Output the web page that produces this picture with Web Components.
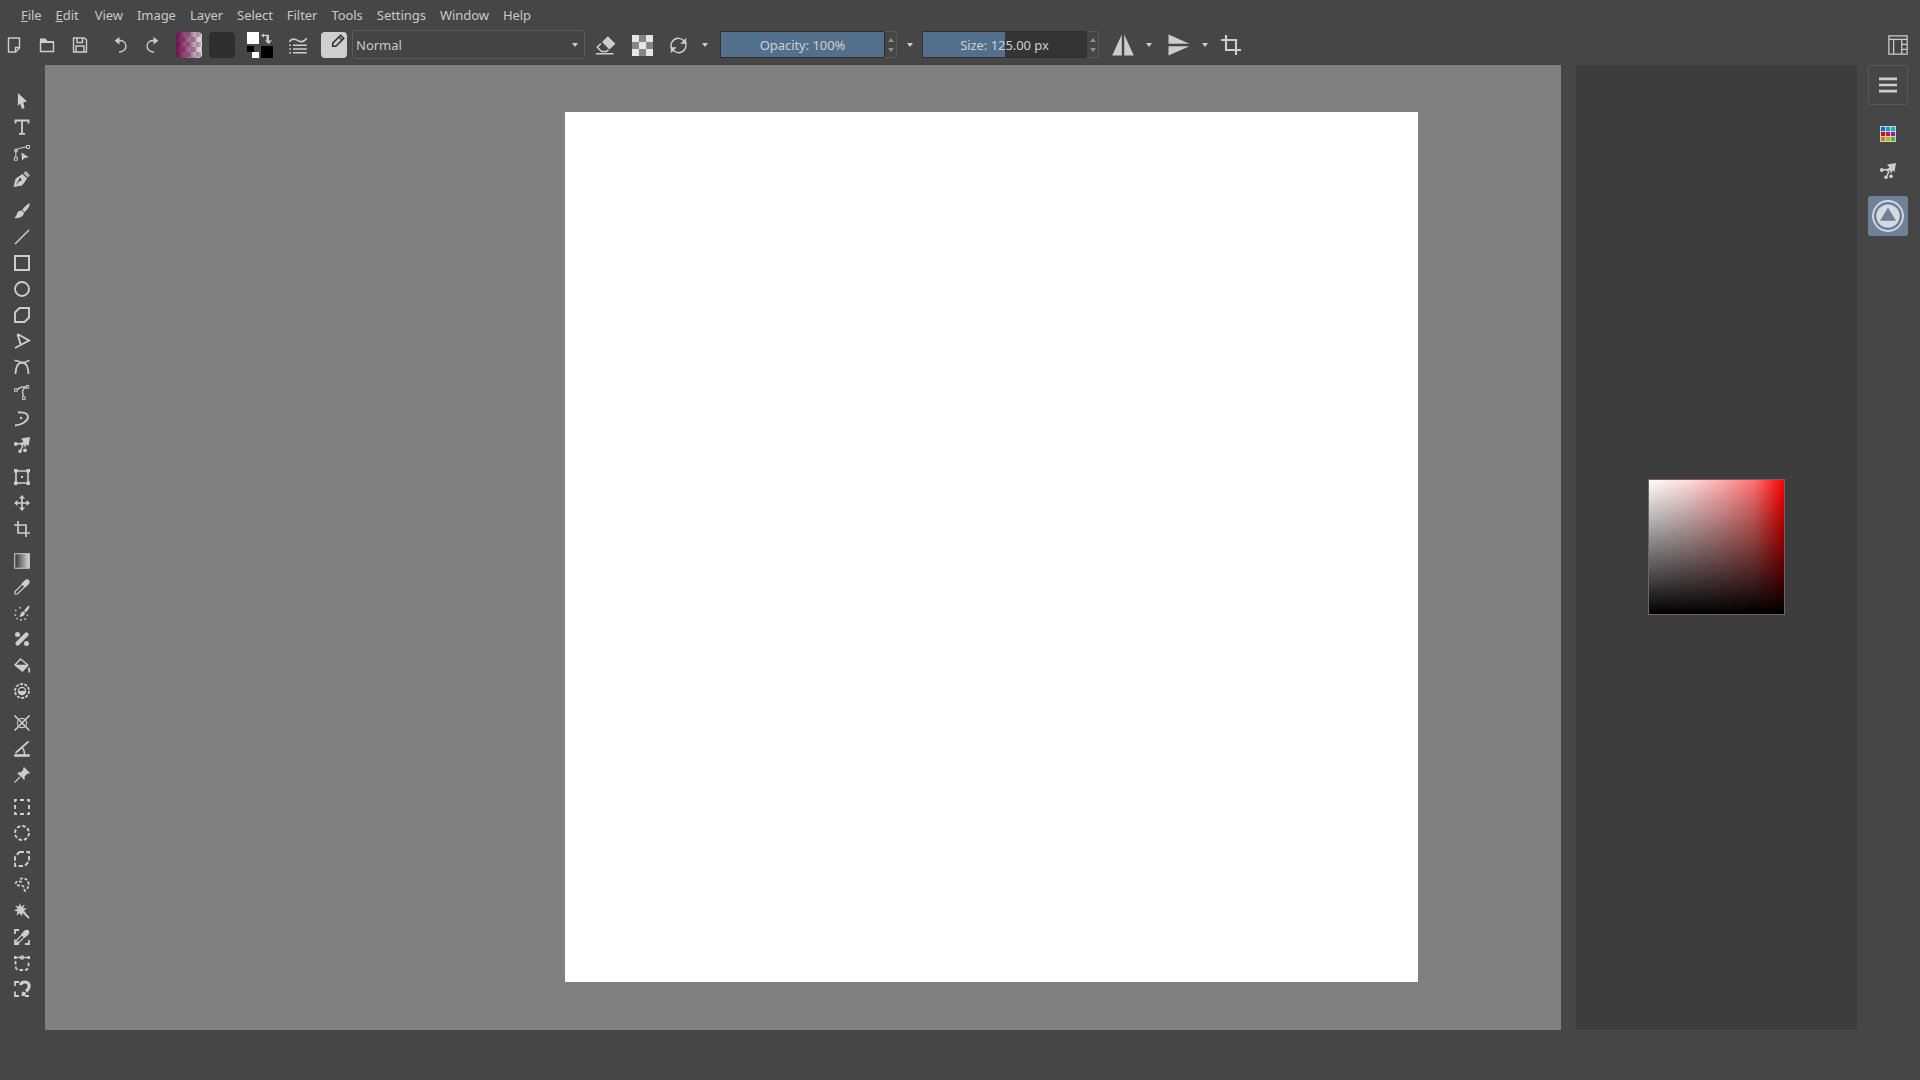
<!DOCTYPE html>
<html>
<head>
<meta charset="utf-8">
<title>Krita</title>
<style>
    html, body { margin: 0; height: 100%; background: #464646; overflow: hidden; }
    body { font: 13px "Noto Sans", sans-serif; color: #c9c9c9; }
</style>
</head>
<body>
<k-window>
    <k-menubar>
        <k-menu-item><u>F</u>ile</k-menu-item>
        <k-menu-item><u>E</u>dit</k-menu-item>
        <k-menu-item style="margin-left:2px">View</k-menu-item>
        <k-menu-item>Image</k-menu-item>
        <k-menu-item>Layer</k-menu-item>
        <k-menu-item>Select</k-menu-item>
        <k-menu-item>Filter</k-menu-item>
        <k-menu-item>Tools</k-menu-item>
        <k-menu-item>Settings</k-menu-item>
        <k-menu-item>Window</k-menu-item>
        <k-menu-item>Help</k-menu-item>
    </k-menubar>
    <k-toolbar>
        <k-tool name="new" w="28"></k-tool>
        <k-tool name="open" w="28" style="margin-left:5px"></k-tool>
        <k-tool name="save" w="28" style="margin-left:5px"></k-tool>
        <k-tool name="undo" w="28" style="margin-left:13px"></k-tool>
        <k-tool name="redo" w="28" style="margin-left:3px"></k-tool>
        <k-swatch kind="gradient" style="margin-left:10px"></k-swatch>
        <k-swatch kind="pattern" style="margin-left:7px"></k-swatch>
        <k-fgbg style="margin-left:12px"></k-fgbg>
        <k-tool name="preset" w="28" size="20" style="margin-left:11px"></k-tool>
        <k-swatch kind="brush" style="margin-left:9px"></k-swatch>
        <k-combo style="margin-left:5px">Normal</k-combo>
        <k-tool name="eraser" w="28" size="20" style="margin-left:7px"></k-tool>
        <k-tool name="alpha" w="28" size="21" style="margin-left:8px"></k-tool>
        <k-tool name="reload" w="28" size="19" style="margin-left:8px"></k-tool>
        <k-caret style="margin-left:9px"></k-caret>
        <k-slider fill="100" style="margin-left:11px">Opacity: 100%</k-slider>
        <k-caret style="margin-left:9px"></k-caret>
        <k-slider fill="50.3" style="margin-left:8px">Size: 125.00 px</k-slider>
        <k-tool name="mirrorh" w="28" size="24" style="margin-left:10px"></k-tool>
        <k-caret style="margin-left:8px"></k-caret>
        <k-tool name="mirrorv" w="28" size="24" style="margin-left:12px"></k-tool>
        <k-caret style="margin-left:8px"></k-caret>
        <k-tool name="crop" w="28" size="20" style="margin-left:8px"></k-tool>
        <k-tool name="layout" w="28" size="20" slot="end"></k-tool>
    </k-toolbar>
    <k-workspace>
        <k-toolbox>
            <k-tool-group>
                <k-tool name="select"></k-tool><k-tool name="text"></k-tool><k-tool name="shapeedit"></k-tool><k-tool name="calligraphy"></k-tool>
            </k-tool-group>
            <k-tool-group>
                <k-tool name="brush"></k-tool><k-tool name="line"></k-tool><k-tool name="rect"></k-tool><k-tool name="ellipse"></k-tool><k-tool name="polygon"></k-tool><k-tool name="polyline"></k-tool><k-tool name="bezier"></k-tool><k-tool name="freepath"></k-tool><k-tool name="dynabrush"></k-tool><k-tool name="multibrush"></k-tool>
            </k-tool-group>
            <k-tool-group>
                <k-tool name="transform"></k-tool><k-tool name="move"></k-tool><k-tool name="crop"></k-tool>
            </k-tool-group>
            <k-tool-group>
                <k-tool name="gradient"></k-tool><k-tool name="picker"></k-tool><k-tool name="colorize"></k-tool><k-tool name="patch"></k-tool><k-tool name="fill"></k-tool><k-tool name="enclose"></k-tool>
            </k-tool-group>
            <k-tool-group>
                <k-tool name="assistant"></k-tool><k-tool name="measure"></k-tool><k-tool name="pin"></k-tool>
            </k-tool-group>
            <k-tool-group>
                <k-tool name="selrect"></k-tool><k-tool name="selellipse"></k-tool><k-tool name="selpoly"></k-tool><k-tool name="sellasso"></k-tool><k-tool name="wand"></k-tool><k-tool name="selpicker"></k-tool><k-tool name="selbezier"></k-tool><k-tool name="selmagnet"></k-tool>
            </k-tool-group>
        </k-toolbox>
        <k-canvas></k-canvas>
        <k-docker><k-color-square></k-color-square></k-docker>
        <k-dock-tabs>
            <k-dock-tab kind="outlined" name="menu"></k-dock-tab>
            <k-dock-tab name="palette" style="margin-top:10px"></k-dock-tab>
            <k-dock-tab name="multibrush"></k-dock-tab>
            <k-dock-tab kind="active" name="advanced"></k-dock-tab>
        </k-dock-tabs>
    </k-workspace>
</k-window>

<script>
const ICONS = {
    new: `<path d="M2.5 1H13.5V11L9.5 15H2.5z"/><path d="M13.5 10.5H9.5V15"/>`,
    open: `<path d="M1.5 5H14.5V14.5H1.5z"/><path class="f" d="M1 1.5H6.5L8.5 4H15V6H1z"/>`,
    save: `<path d="M1.5 1H12.5L14.5 3V15H1.5z"/><path d="M5 1V5.5H10.5V1M4 15V9H12V15"/>`,
    undo: `<path d="M5 3.5C10 3 13 5.5 13 9S10 15 6 15"/><path class="f" d="M6.5 0V7.5L1.5 3.8z"/>`,
    redo: `<path d="M11 3.5C6 3 3 5.5 3 9S6 15 10 15"/><path class="f" d="M9.5 0V7.5L14.5 3.8z"/>`,
    preset: `<path d="M1 5.5C3 2.5 5.5 3 8 4.5S13 5.5 15 2.5" stroke-width="1.3"/><path d="M1 8.2H2.4M4 8.2H15M1 11.2H2.4M4 11.2H15M1 14.2H2.4M4 14.2H15" stroke-width="1.3"/>`,
    eraser: `<path class="f" d="M9.5 1 15.5 7 10.8 11.5 4.8 5.6z"/><path d="M4 6.8 1 9.8 4.5 13.2H8.5L10 11.7" stroke-width="1.2"/><path d="M0 15H14" stroke-width="1.2"/>`,
    alpha: `<path class="f" d="M0 0H16V16H0z" style="fill:#858585"/><path class="f" d="M0 0H5.3V5.3H0zM10.7 0H16V5.3H10.7zM5.3 5.3H10.7V10.7H5.3zM0 10.7H5.3V16H0zM10.7 10.7H16V16H10.7z" style="fill:#e6e6e6"/>`,
    reload: `<path d="M2 10.5C.5 6 4 1.5 8.5 2 10.5 2.2 12 3.2 13 4.5M14 5.5C15.5 10 12 14.5 7.5 14 5.5 13.8 4 12.8 3 11.5" stroke-width="1.2"/><path class="f" d="M14.5 1.5V6.5H9.5zM1.5 14.5V9.5H6.5z"/>`,
    mirrorh: `<path class="f" d="M7.2 1 .8 15H7.2zM8.8 1 15.2 15H8.8z"/>`,
    mirrorv: `<path class="f" d="M1 1 15 7.2H1zM1 8.8 15 8.8 1 15z"/>`,
    crop: `<path d="M4 0V12H16M0 4H12V16" stroke-width="1.7"/>`,
    layout: `<path d="M.7 .7H15.3V15.3H.7zM.7 3.5H15.3M4.5 3.5V15.3M11 3.5V15.3M11 7.5H15.3M11 11.5H15.3" stroke-width="1"/>`,
    select: `<path class="f" d="M4 0 13 8.5 9.3 9.3 10.5 15 8 16 6 10.5 3.8 13z"/>`,
    text: `<path d="M8 1.5V14.5M5 14.8H11" stroke-width="1.8"/><path d="M1.5 4.5V1.5H14.5V4.5" stroke-width="1.8"/>`,
    shapeedit: `<path d="M1.8 12V6C1.8 4 4 3.5 12.5 1.8" stroke-width="1.1"/><path d="M.3 12.3H3.3V15.3H.3zM12.5 .5H15.5V3.5H12.5zM.8 4.2H3.3V6.7H.8z" stroke-width="1"/><path class="f" d="M7.5 7.5 15 12.5 10.8 12.8 8 15.5z"/>`,
    calligraphy: `<path class="f" fill-rule="evenodd" d="M-.5 16 1.5 8C4 6 6.5 4 8.5 3L13 7.5C12 9.5 10 12 8 14.5zM1.5 14.2 5.8 10A1.4 1.4 0 1 0 4.8 9.1z"/><path d="M10 1.8 14.2 6M11.2 .5 15.5 4.8" stroke-width="1.3"/>`,
    brush: `<path class="f" d="M15.7 .3C16.2 3 13 7 10.8 9.3L8.3 6.8C10.5 4 13.5 .8 15.7 .3zM7.4 7.4C9.5 7.5 10.2 9.5 9.7 11 8.7 14.2 4 15.7 .3 15 2.5 13.5 2.5 11.5 3.3 9.7 4 8 5.8 7.3 7.4 7.4z"/>`,
    line: `<path d="M1 15 15 1" stroke-width="1.4"/>`,
    rect: `<path d="M1 1H15V15H1z" stroke-width="2"/>`,
    ellipse: `<circle cx="8" cy="8" r="7" stroke-width="1.9"/>`,
    polygon: `<path d="M5.5 1H15V10.5L10.5 15H1V5.5z" stroke-width="1.9"/>`,
    polyline: `<path d="M3.5 1 15 7.5 1 15M3.5 1 6.5 11" stroke-width="1.9"/>`,
    bezier: `<path d="M1.5 15C1.5 8 4 3.5 8 3.5S14.5 8 14.5 15" stroke-width="1.8"/><path d="M.5 1.5C3 1.5 5 2.5 8 3.5S13 1.5 15.5 1.5" stroke-width="1.4"/>`,
    freepath: `<path d="M3.2 5C6 1.5 9 1.5 12 2.2 8 4 8 8 9.5 11.5" stroke-width="1.4"/><path d="M.5 3.7H3.2V6.4H.5zM12 .5H14.7V3.2H12zM8.5 11.8H11.2V14.5H8.5z" stroke-width="1"/>`,
    dynabrush: `<path d="M4 1.5C9 .8 14 2 14 6 14 10 8 14 1 14.5" stroke-width="1.8"/><circle class="f" cx="7" cy="7" r="1.2"/>`,
    multibrush: `<path class="f" d="M16 0 7 1.5 9.5 4.5 5.5 6.8 8 9 10 7.5 11 11 12.5 7.5 14.5 9z"/><path d="M7 6.5 2.5 7M9 8.5 6.5 13.5" stroke-width="1.5"/><circle class="f" cx="1.8" cy="7" r="1.9"/><circle class="f" cx="6" cy="14.3" r="1.8"/><circle class="f" cx="11" cy="13.3" r="1.9"/>`,
    transform: `<path d="M2 2H14V14H2z" stroke-width="1.6"/><path class="f" d="M0 0H3.5V3.5H0zM12.5 0H16V3.5H12.5zM0 12.5H3.5V16H0zM12.5 12.5H16V16H12.5zM7 7H9V9H7z"/>`,
    move: `<path d="M8 2V14M2 8H14" stroke-width="1.7"/><path class="f" d="M8 0 11 3.5H5zM8 16 11 12.5H5zM0 8 3.5 5V11zM16 8 12.5 5V11z"/>`,
    gradient: `<defs><linearGradient id="g"><stop offset="0" stop-color="#333"/><stop offset="1" stop-color="#d8d8d8"/></linearGradient></defs><path d="M.7 .7H15.3V15.3H.7z" style="fill:url(#g)" stroke-width="1.1"/>`,
    picker: `<path d="M8.5 5 11 7.5 3.5 15H1V12.5z" stroke-width="1.2"/><path class="f" d="M7.5 4.8 10 2C11.5 .2 13.5 -.3 15 1 16.3 2.5 15.8 4.5 14 6L11.2 8.5z"/>`,
    colorize: `<path class="f" d="M15.5 .5C16 3 13.5 5.5 11.8 7.5L10 5.8C11.5 3.8 13.5 1 15.5 .5zM9.2 6.5C10.8 6.8 11.3 8 10.7 9.3 10 11 7.5 12 5 11.5 6.3 10.5 6.5 8.7 7.2 7.7 7.7 7 8.4 6.4 9.2 6.5z"/><path d="M1 5 2.5 6M.5 10H2.2M2.5 14 3.8 13M7 15.8V14M11.5 15 10.8 13.3M14 10.5 12.8 10M5.5 2 6.3 3.5" stroke-width="1.5"/>`,
    patch: `<path d="M3.5 12.5 12.5 3.5" stroke-width="4.2" stroke-linecap="round"/><circle class="f" cx="3.5" cy="3.5" r="2.5"/><circle class="f" cx="12.5" cy="12.5" r="2.5"/>`,
    fill: `<path d="M6.5 2 13.8 8 8.5 14 1 8z" stroke-width="1.4"/><path class="f" d="M1 7.7H14L8.5 14.5z"/><path d="M14.5 10.5C15.5 12 15.5 14 15 15.5" stroke-width="1.7"/>`,
    enclose: `<circle cx="8" cy="8" r="7" stroke-width="1.8" stroke-dasharray="3 1.4"/><circle cx="8" cy="8" r="3.6" stroke-width="1.3"/><path class="f" d="M4.4 8H11.6A3.6 3.6 0 0 1 4.4 8z"/>`,
    assistant: `<path d="M.5 .5 15.5 15.5M15.5 .5 .5 15.5" stroke-width="1.6"/><circle cx="8" cy="8" r="4.6" stroke-width="1.1"/>`,
    measure: `<path d="M14.5 .5 1.5 12" stroke-width="1.7"/><path d="M1 14H15V15H1z" stroke-width="1.6"/><path d="M8.5 7C10 8.5 10.5 11 10.5 14" stroke-width="1.5"/>`,
    pin: `<path class="f" d="M10 0 16 6 14.5 7 13.5 6.5 10.5 9.8C11 11 10.8 12.2 10.2 13L3.2 6C4 5.3 5.2 5 6.5 5.5L9.5 2.5 9 1.5z"/><path d="M6 10 .5 15.5" stroke-width="1.1"/>`,
    selrect: `<path d="M1 1H15V15H1z" stroke-width="1.9" stroke-dasharray="4 3" stroke-dashoffset="2"/>`,
    selellipse: `<circle cx="8" cy="8" r="7" stroke-width="1.9" stroke-dasharray="3.5 2"/>`,
    selpoly: `<path d="M5.5 1H15V10.5L10.5 15H1V5.5z" stroke-width="1.9" stroke-dasharray="4.5 2.2"/>`,
    sellasso: `<path d="M8 5C3 3.5 1 5.5 2 7 4 10 10 7 10 11 10 13 11.5 14.5 12 15M6 2C9 .5 14 2 14.5 6 14.8 9.5 13.5 11 13 12" stroke-width="1.8" stroke-dasharray="3 1.6"/>`,
    wand: `<path class="f" d="M6 0 7.2 3.8 10.5 1.5 9.2 5.2 13 5.5 9.8 7.8 12.5 10.5 8.5 9.8 8 13.5 5.8 10.2 2.5 12.5 3.5 8.5 0 7.5 3.7 5.8 1.2 2.5 4.8 3.5z"/><path d="M9 9 15 15" stroke-width="1.8"/>`,
    selpicker: `<path d="M1 5V1H5M1 10.5V15H5M11 15H15V11" stroke-width="1.8"/><path d="M8 5.8 10.3 8.1 5 13.4H2.8V11z" stroke-width="1.2"/><path class="f" d="M7.2 5 10 2C11.5 .5 13.5 .3 14.7 1.5 15.8 2.8 15.5 4.5 14 6L11 8.8z"/>`,
    selbezier: `<path d="M1.5 6V11C1.5 13.5 3 15 5 15H11C13 15 14.5 13.5 14.5 11V6" stroke-width="1.8" stroke-dasharray="3.6 2"/><path d="M1 2.5H15" stroke-width="1.3"/><circle cx="8" cy="2.5" r="1.6" stroke-width="1.2"/><path class="f" d="M0 1H2.5V4H0zM13.5 1H16V4H13.5z"/>`,
    selmagnet: `<path d="M1 5V1H5M1 10.5V15H5M11 15H15" stroke-width="1.8"/><path d="M6.5 4C7 1.5 9 1 11 1 14 1 15.5 3.5 15 6 14.7 8 13.5 9 12 10.5" stroke-width="3.2"/><path class="f" d="M8 10.5 12 11.5 11 15H7.5z"/>`,
    menu: `<path d="M0 2.5H16M0 8H16M0 13.5H16" stroke-width="2.4"/>`,
    advanced: `<circle cx="8" cy="8" r="7.5" stroke-width=".9" style="stroke:#d6dbe1"/><circle class="f" cx="8" cy="8" r="5.8" style="fill:#d6dbe1"/><path class="f" d="M8 3.8 12 10.4H4z" style="fill:#6d8199"/>`
};

// shared icon, everything else uses it
class KIcon extends HTMLElement {
    connectedCallback() {
        const size = this.getAttribute('size') || 16;
        const root = this.shadowRoot || this.attachShadow({ mode: 'open' });
        root.innerHTML = `
            <style>
                :host { display: block; width: ${size}px; height: ${size}px; color: #cdcdcd; }
                svg { display: block; width: 100%; height: 100%; overflow: visible; }
                .s { fill: none; stroke: currentColor; stroke-width: 1.4; }
                .f { fill: currentColor; stroke: none; }
            </style>
            <svg viewBox="0 0 16 16"><g class="s">${ICONS[this.getAttribute('name')] || ''}</g></svg>`;
    }
}
customElements.define('k-icon', KIcon);

class KPalette extends HTMLElement {
    constructor() {
        super();
        const cols = ['#0c6fcf', '#149fc9', '#12bda5', '#c80f14', '#c9135a', '#9c14c8', '#c77f0c', '#a9bd10', '#3fc70e'];
        this.attachShadow({ mode: 'open' }).innerHTML = `
            <style>
                :host { display: grid; grid-template-columns: repeat(3, 1fr); gap: 1px; width: 14px; height: 14px; padding: 1px; background: #d0d0d0; }
                i { display: block; }
            </style>
            ${cols.map(c => `<i style="background:${c}"></i>`).join('')}`;
    }
}
customElements.define('k-palette', KPalette);

const simple = (tag, css, html) => customElements.define(tag, class extends HTMLElement {
    constructor() {
        super();
        this.attachShadow({ mode: 'open' }).innerHTML = `<style>${css}</style>${html || '<slot></slot>'}`;
    }
});

simple('k-window', `:host { display: flex; flex-direction: column; height: 1080px; }`);
simple('k-menubar', `:host { display: flex; height: 30px; padding-left: 14px; box-sizing: border-box; align-items: center; }`);
simple('k-menu-item', `:host { display: block; padding: 0 7px; line-height: 30px; letter-spacing: -.05px; }`);
simple('k-toolbar', `
    :host { display: flex; align-items: center; height: 30px; padding-bottom: 5px; }
    .end { margin-left: auto; margin-right: 8px; display: flex; }`,
    `<slot></slot><div class="end"><slot name="end"></slot></div>`);
simple('k-workspace', `:host { display: flex; height: 965px; }`);
simple('k-toolbox', `:host { display: flex; flex-direction: column; width: 45px; padding: 23px 1px 0 0; gap: 6px; box-sizing: border-box; flex: none; }`);
simple('k-tool-group', `:host { display: flex; flex-direction: column; }`);
simple('k-caret', `:host { display: block; width: 0; height: 0; margin-top: -4px; padding: 0 4px; box-sizing: content-box; }
    i { display: block; width: 0; height: 0; margin-left: -3.5px; border: 3.5px solid transparent; border-top: 4px solid #cdcdcd; border-bottom: 0; }`, `<i></i>`);

// toolbar or toolbox button, centres one icon
class KTool extends HTMLElement {
    connectedCallback() {
        const w = this.getAttribute('w');
        const root = this.shadowRoot || this.attachShadow({ mode: 'open' });
        root.innerHTML = `
            <style>
                :host { display: flex; align-items: center; justify-content: center; flex: none; height: 26px; width: ${w ? w + 'px' : '100%'}; }
            </style>
            <k-icon name="${this.getAttribute('name')}" size="${this.getAttribute('size') || 16}"></k-icon>`;
    }
}
customElements.define('k-tool', KTool);

class KSwatch extends HTMLElement {
    connectedCallback() {
        const kind = this.getAttribute('kind');
        const looks = {
            gradient: `background: linear-gradient(90deg, #6d1250, rgba(109,18,80,.55) 55%, rgba(109,18,80,0)), repeating-conic-gradient(#eeeeee 0 25%, #b4b4b4 0 50%) 0 0 / 10px 10px;`,
            pattern: `background: #2e2e2e;`,
            brush: `background: #cfcfcf;`
        };
        const root = this.shadowRoot || this.attachShadow({ mode: 'open' });
        root.innerHTML = `
            <style>
                :host { display: flex; align-items: center; justify-content: center; flex: none; width: 26px; height: 26px; border-radius: 4px; ${looks[kind]} }
                svg { width: 14px; height: 14px; margin: 0 0 8px 8px; }
            </style>
            ${kind === 'brush' ? `<svg viewBox="0 0 16 16"><path d="M2 14V10.5L11 1.5 14.5 5 5.5 14z" fill="none" stroke="#333" stroke-width="1.8"/><path d="M9 3.5 12.5 7" stroke="#333" stroke-width="1.6"/></svg>` : ''}`;
    }
}
customElements.define('k-swatch', KSwatch);

simple('k-fgbg', `
    :host { display: grid; grid-template-columns: 12px 2px 12px; grid-template-rows: 12px 2px 12px; width: 26px; height: 26px; flex: none; }
    .fg { background: #fff; grid-area: 1 / 1; }
    .bg { background: #000; grid-area: 3 / 3; }
    .swap { grid-area: 1 / 3; width: 12px; height: 12px; }
    .mini { grid-area: 3 / 1; width: 12px; height: 12px; display: grid; grid-template: 6px 6px / 7px 5px; }
    .mini b { background: #000; width: 7px; height: 6px; }
    .mini i { background: #fff; grid-area: 2 / 1 / 3 / 3; width: 7px; margin-left: 5px; }`,
    `<div class="fg"></div>
     <svg class="swap" viewBox="0 0 12 12"><path d="M3 1.5 0 3.5 3 5.5V4H5.5V8.5H4L7.5 12 11 8.5H8V2.8H3z" fill="#cdcdcd"/></svg>
     <div class="mini"><b></b><i></i></div>
     <div class="bg"></div>`);

simple('k-combo', `
    :host { display: flex; align-items: center; flex: none; width: 233px; height: 29px; box-sizing: border-box; margin-bottom: 1px; padding: 0 5px 0 3px; border: 1px solid #5b5b5b; border-radius: 3px; background: #444; }
    span { flex: 1; }
    i { width: 0; height: 0; margin-right: 1px; border: 3.5px solid transparent; border-top: 4px solid #cdcdcd; border-bottom: 0; }`,
    `<span><slot></slot></span><i></i>`);

class KSlider extends HTMLElement {
    connectedCallback() {
        const fill = this.getAttribute('fill');
        const root = this.shadowRoot || this.attachShadow({ mode: 'open' });
        root.innerHTML = `
            <style>
                :host { display: flex; flex: none; height: 27px; margin-bottom: 1px; }
                .bar { width: 163px; height: 25px; border: 1px solid #2f2f2f; display: flex; align-items: center; justify-content: center;
                    background: linear-gradient(90deg, #52708c ${fill}%, #343434 ${fill}%); color: #cfcfcf; letter-spacing: -.05px; }
                .spin { width: 11px; height: 25px; border: 1px solid #585858; border-left: 0; border-radius: 0 3px 3px 0; display: flex; flex-direction: column; align-items: center; justify-content: center; gap: 6px; }
                .up { border: 3.5px solid transparent; border-bottom: 4px solid #8c8c8c; border-top: 0; }
                .down { border: 3.5px solid transparent; border-top: 4px solid #8c8c8c; border-bottom: 0; }
            </style>
            <div class="bar"><slot></slot></div>
            <div class="spin"><i class="up"></i><i class="down"></i></div>`;
    }
}
customElements.define('k-slider', KSlider);

simple('k-canvas', `
    :host { display: block; flex: none; width: 1516px; box-sizing: border-box; padding: 47px 0 0 520px; background: #808080; }
    .paper { width: 853px; height: 870px; background: #fff; }`,
    `<div class="paper"></div>`);
simple('k-docker', `:host { display: flex; flex: none; width: 281px; margin-left: 15px; padding-bottom: 1px; box-sizing: border-box; align-items: center; justify-content: center; background: #3d3d3d; }`);
simple('k-color-square', `
    :host { display: block; width: 137px; height: 136px; box-sizing: border-box; border: 1px solid #7a5f5f;
        background: linear-gradient(to top, #000, rgba(0,0,0,0)), linear-gradient(to right, #fff, #ffd8d8 30%, #ffa8a8 55%, #ff7070 78%, #f00); }`, ` `);
simple('k-dock-tabs', `:host { display: flex; flex-direction: column; align-items: center; flex: none; width: 63px; padding-right: 1px; box-sizing: border-box; }`);

class KDockTab extends HTMLElement {
    connectedCallback() {
        const kind = this.getAttribute('kind') || '';
        const name = this.getAttribute('name');
        const looks = {
            outlined: `height: 40px; border: 1px solid #5a5a5a;`,
            active: `height: 40px; margin-top: 7px; background: #6d8199;`,
            '': `height: 37px;`
        };
        const body = name === 'palette' ? `<k-palette></k-palette>`
            : `<k-icon name="${name}" size="${kind === 'active' ? 32 : kind === 'outlined' ? 18 : 16}"></k-icon>`;
        const root = this.shadowRoot || this.attachShadow({ mode: 'open' });
        root.innerHTML = `
            <style>
                :host { display: flex; align-items: center; justify-content: center; width: 40px; box-sizing: border-box; border-radius: 3px; ${looks[kind]} }
            </style>
            ${body}`;
    }
}
customElements.define('k-dock-tab', KDockTab);
</script>
</body>
</html>
